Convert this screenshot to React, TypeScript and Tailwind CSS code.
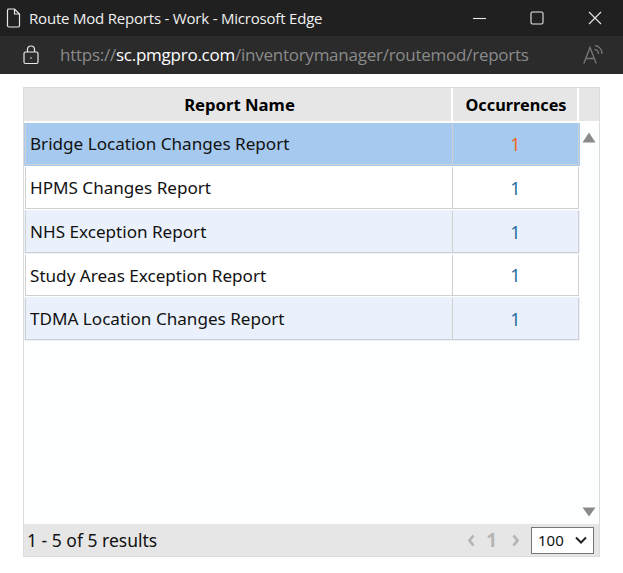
import React from "react";

const rows = [
  { name: "Bridge Location Changes Report", bg: "bg-[#a6c9ef]", num: "text-[#ee6a1f]", h: "h-[43px] pb-[1px]" },
  { name: "HPMS Changes Report", bg: "bg-white", num: "text-[#2a6f9e]", h: "h-[44px] py-[1px]" },
  { name: "NHS Exception Report", bg: "bg-[#ebf1fc]", num: "text-[#2a6f9e]", h: "h-[44px] py-[1px]" },
  { name: "Study Areas Exception Report", bg: "bg-white", num: "text-[#2a6f9e]", h: "h-[43px] py-[1px]" },
  { name: "TDMA Location Changes Report", bg: "bg-[#ebf1fc]", num: "text-[#2a6f9e]", h: "h-[44px] py-[1px]" },
];

export default function App() {
  return (
    <div className="w-[623px] h-[573px] bg-white flex flex-col overflow-hidden font-['Noto_Sans',sans-serif]">
      <div className="h-[36px] bg-[#202020] flex items-center text-white shrink-0">
        <svg width="16" height="20" viewBox="0 0 16 20" className="ml-[5px] -mt-[1px]" fill="none" stroke="#e8e8e8" strokeWidth="1.2">
          <path d="M2.5 1h7l5 5v11.5a1.5 1.5 0 0 1-1.5 1.5h-9a1.5 1.5 0 0 1-1.5-1.5v-15a1.5 1.5 0 0 1 1.5-1.5zM9.5 1v5h5" />
        </svg>
        <span className="ml-[8px] text-[15px] font-['Open_Sans',sans-serif] tracking-[-0.2px] text-[#f0f0f0] whitespace-nowrap">Route Mod Reports - Work - Microsoft Edge</span>
        <div className="ml-auto flex items-center">
          <svg width="14" height="14" viewBox="0 0 14 14" stroke="#e8e8e8" strokeWidth="1.1" fill="none"><path d="M0 7.5h13" /></svg>
          <svg width="14" height="14" viewBox="0 0 14 14" stroke="#e8e8e8" strokeWidth="1.1" fill="none" className="ml-[43px]"><rect x="1" y="1" width="12" height="12" rx="1.5" /></svg>
          <svg width="14" height="14" viewBox="0 0 14 14" stroke="#e8e8e8" strokeWidth="1.1" fill="none" className="ml-[44px] mr-[21px]"><path d="M1 1l12 12M13 1L1 13" /></svg>
        </div>
      </div>
      <div className="h-[38px] bg-[#2b2b2b] flex items-center shrink-0">
        <svg width="16" height="20" viewBox="0 0 16 20" className="ml-[23px]" fill="none" stroke="#e8e8e8" strokeWidth="1.2">
          <rect x="1" y="7" width="14" height="11.5" rx="1.5" />
          <path d="M4.5 7V4.5a3.5 3.5 0 0 1 7 0V7" />
          <circle cx="8" cy="13" r="0.8" fill="#e8e8e8" stroke="none" />
        </svg>
        <span className="ml-[21px] text-[17px] font-['Open_Sans',sans-serif] tracking-[-0.25px] text-[#8a8a8a] whitespace-nowrap">
          https://<span className="text-white">sc.pmgpro.com</span>/inventorymanager/routemod/reports
        </span>
        <svg width="22" height="22" viewBox="0 0 22 22" className="ml-auto mr-[18px]" fill="none" stroke="#757575" strokeWidth="1.4">
          <path d="M.8 19.5L7 3.5l6.2 16M3 14.5h8" />
          <path d="M11.5 5.5a4 4 0 0 1 4 4.5M12 1.5a8 8 0 0 1 7 8.5" />
        </svg>
      </div>
      <div className="mt-[13px] ml-[23px] w-[577px] h-[470px] border border-[#dcdcdc] bg-[#fdfefe] flex flex-col relative">
        <div className="h-[35px] bg-[#e6e6e6] flex items-stretch shrink-0 border-b-2 border-white">
          <div className="w-[429px] flex items-center justify-center border-r-2 border-white font-bold text-[16.7px] text-black pl-[4px] pt-[1px]">Report Name</div>
          <div className="w-[126px] flex items-center justify-center border-r-2 border-white font-bold text-[16.3px] text-black pl-[2px] pt-[2px]">Occurrences</div>
        </div>
        <div className="flex flex-col">
          {rows.map((r) => (
            <div key={r.name} className={`w-[556px] ${r.h} ${r.bg} px-[1px] shrink-0`}>
              <div className="h-full flex items-stretch text-[17.1px]">
                <div className="w-[428px] flex items-center pl-[4px] pt-[1px] text-[#111] border-l border-r border-b border-[#d0d0d0] whitespace-nowrap">{r.name}</div>
                <div className={`flex-1 flex items-center justify-center pt-[1px] text-[18px] border-r border-b border-[#d0d0d0] ${r.num}`}>1</div>
              </div>
            </div>
          ))}
        </div>
        <svg width="14" height="11" viewBox="0 0 14 11" className="absolute right-[3px] top-[44px]"><path d="M7 .5l6.5 10H.5z" fill="#8a8a8a" /></svg>
        <svg width="14" height="10" viewBox="0 0 14 10" className="absolute right-[3px] top-[419px]"><path d="M7 9.5L.5 .5h13z" fill="#8a8a8a" /></svg>
        <div className="mt-auto h-[32px] bg-[#e6e6e6] flex items-center shrink-0 pl-[3px]">
          <span className="text-[17.5px] text-[#111] whitespace-nowrap">1 - 5 of 5 results</span>
          <svg width="8" height="13" viewBox="0 0 8 13" className="ml-auto" fill="none" stroke="#b5b5b5" strokeWidth="2.8"><path d="M6.5 1.5L2.5 6.5l4 5" /></svg>
          <span className="ml-[11px] text-[#b5b5b5] font-bold text-[19px]">1</span>
          <svg width="8" height="13" viewBox="0 0 8 13" className="ml-[15px]" fill="none" stroke="#b5b5b5" strokeWidth="2.8"><path d="M1.5 1.5l4 5-4 5" /></svg>
          <div className="ml-[11px] mr-[5px] w-[63px] h-[27px] bg-white border border-[#767676] flex items-center justify-between pl-[6px] pr-[6px] text-[15px] text-[#111]">
            100
            <svg width="12" height="8" viewBox="0 0 12 8" fill="none" stroke="#222" strokeWidth="2"><path d="M1 1.5l5 5 5-5" /></svg>
          </div>
        </div>
      </div>
    </div>
  );
}
